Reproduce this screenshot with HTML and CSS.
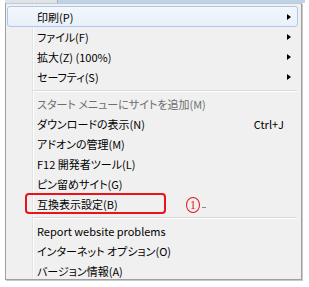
FILE: index.html
```html
<!DOCTYPE html>
<html lang="ja">
<head>
<meta charset="utf-8">
<link rel="stylesheet" href="styles.css">
</head>
<body>
<div class="strip"><span class="strip-gray"></span><span class="strip-blue"></span></div>
<div class="menu">
  <ul class="items">
    <li class="item hover"><span class="label">印刷(P)</span><span class="arrow"></span></li>
    <li class="item"><span class="label">ファイル(F)</span><span class="arrow"></span></li>
    <li class="item"><span class="label">拡大(Z) (100%)</span><span class="arrow"></span></li>
    <li class="item"><span class="label">セーフティ(S)</span><span class="arrow"></span></li>
    <li class="sep"></li>
    <li class="item disabled"><span class="label">スタート メニューにサイトを追加(M)</span></li>
    <li class="item"><span class="label">ダウンロードの表示(N)</span><span class="key">Ctrl+J</span></li>
    <li class="item"><span class="label">アドオンの管理(M)</span></li>
    <li class="item"><span class="label">F12 開発者ツール(L)</span></li>
    <li class="item"><span class="label">ピン留めサイト(G)</span></li>
    <li class="item"><span class="label">互換表示設定(B)</span></li>
    <li class="sep"></li>
    <li class="item"><span class="label">Report website problems</span></li>
    <li class="item"><span class="label">インターネット オプション(O)</span></li>
    <li class="item"><span class="label">バージョン情報(A)</span></li>
  </ul>
  <div class="highlight-box"></div>
  <div class="callout"><span class="circle">1</span><span class="dash"></span></div>
</div>
</body>
</html>
```
FILE: styles.css
```css
html, body {
  margin: 0;
  padding: 0;
  background: #ffffff;
}
body {
  width: 309px;
  height: 287px;
  overflow: hidden;
  font-family: "Noto Sans CJK JP", "Noto Sans", sans-serif;
  font-size: 11px;
  font-feature-settings: "palt";
  color: #000;
}
.strip {
  display: flex;
  height: 3px;
  margin-left: 5px;
  width: 300px;
}
.strip-gray {
  width: 52px;
  background: #dde3ea;
  border-right: 1px solid #9fb4cc;
}
.strip-blue {
  flex: 1;
  background: #bcd3ec;
}
.menu {
  position: relative;
  margin-left: 5px;
  width: 297px;
  height: 277px;
  box-sizing: border-box;
  border: 1px solid #a0a0a0;
  border-top-color: #c8c8c8;
  box-shadow: 1px 1px 0 #c8c8c8;
  background-color: #f0f0f0;
  background-image: linear-gradient(to right, transparent 26px, #e2e3e3 26px, #e2e3e3 27px, #ffffff 27px, #ffffff 28px, transparent 28px);
  padding-top: 2px;
}
.items {
  list-style: none;
  margin: 0;
  padding: 0;
}
.item {
  display: flex;
  align-items: center;
  height: 20px;
  margin: 0 3px 0 1px;
  padding: 0 6px 0 29px;
  border: 1px solid transparent;
  box-sizing: border-box;
  line-height: 20px;
  white-space: nowrap;
}
.item.hover {
  height: 21px;
  border-color: #a9c9ee;
  border-radius: 3px;
  background: linear-gradient(#f3f7fc, #e9f0fa);
}
.label {
  flex: 1;
}
.disabled {
  color: #6d6d6d;
}
.arrow {
  width: 0;
  height: 0;
  border-top: 3.5px solid transparent;
  border-bottom: 3.5px solid transparent;
  border-left: 4px solid #000;
  margin-right: 0;
}
.key {
  margin-right: 7px;
}
.sep {
  height: 7px;
  margin-left: 27px;
  margin-right: 4px;
  background: linear-gradient(transparent 3px, #d8d8d8 3px, #d8d8d8 4px, #ffffff 4px, #ffffff 5px, transparent 5px);
}
.highlight-box {
  position: absolute;
  left: 19px;
  top: 189px;
  width: 141px;
  height: 21px;
  box-sizing: border-box;
  border: 2px solid #e8141a;
  border-radius: 4px;
}
.callout {
  position: absolute;
  left: 180px;
  top: 193px;
  display: flex;
  align-items: flex-end;
}
.circle {
  width: 14px;
  height: 16px;
  box-sizing: border-box;
  border: 1px solid #e8141a;
  border-radius: 50%;
  color: #e8141a;
  font-family: "Liberation Serif", serif;
  font-size: 12px;
  line-height: 14px;
  text-align: center;
}
.dash {
  width: 4px;
  height: 1px;
  background: #8a8a8a;
  margin: 0 0 5px 2px;
}
```
